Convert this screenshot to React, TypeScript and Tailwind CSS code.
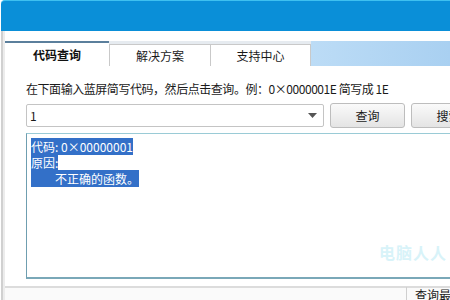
import React from 'react';

const font = { fontFamily: '"Noto Sans CJK SC", "Noto Sans", sans-serif' };

export default function App() {
    return (
        <div className="w-[450px] h-[300px] bg-white overflow-hidden flex flex-col text-[12px] text-[#1a1a1a]" style={font}>
            {/* Title bar */}
            <div className="h-[31px] shrink-0 bg-[#0a8fd8] border-t border-[#3ec0f0] rounded-tl-[4px] ml-[1px]" />

            {/* Window body */}
            <div className="flex-1 flex flex-col ml-[1px] border-l-2 border-[#d0d0d0]">
                <div className="flex-1 flex flex-col border-l-2 border-[#ececec] min-h-0">
                    <div className="h-[10px] shrink-0 bg-white" />

                    {/* Tabs */}
                    <div className="h-[25px] shrink-0 flex items-end bg-[#e6ebf0]">
                        <div className="w-[104px] h-[25px] bg-white border-t-2 border-[#5b7f9c] flex items-center justify-center font-bold text-[#111]">
                            代码查询
                        </div>
                        <div className="w-[101px] h-[22px] bg-white border-t border-l border-[#c9c9c9] flex items-center justify-center">
                            解决方案
                        </div>
                        <div className="w-[101px] h-[22px] bg-white border-t border-l border-r border-[#c9c9c9] flex items-center justify-center">
                            支持中心
                        </div>
                        <div className="flex-1 h-[25px] bg-gradient-to-r from-[#bcdcf6] to-[#a9d0f1]" />
                    </div>

                    {/* Panel */}
                    <div className="flex-1 flex flex-col pl-[21px] pt-[15px] min-h-0 border-b-2 border-[#dcdcdc]">
                        <p className="leading-[16px] tracking-[-0.45px] whitespace-nowrap">在下面输入蓝屏简写代码，然后点击查询。例：0×0000001E 简写成 1E</p>

                        <div className="mt-[6px] flex items-center gap-[6px]">
                            <div className="w-[298px] h-[23px] shrink-0 border border-[#c4c4c4] rounded-[2px] bg-white flex items-center justify-between pl-[3px] pr-[6px]">
                                <span>1</span>
                                <svg width="9" height="5" viewBox="0 0 9 5"><path d="M0 0h9L4.5 5z" fill="#555" /></svg>
                            </div>
                            <button className="w-[75px] h-[25px] shrink-0 border border-[#bdbdbd] rounded-[3px] bg-gradient-to-b from-[#fafafa] to-[#e4e4e4] flex items-center justify-center">
                                查询
                            </button>
                            <button className="w-[75px] h-[25px] shrink-0 border border-[#bdbdbd] rounded-[3px] bg-gradient-to-b from-[#fafafa] to-[#e4e4e4] flex items-center justify-center">
                                搜索
                            </button>
                        </div>

                        {/* Result box */}
                        <div className="relative mt-[5px] h-[146px] w-[440px] shrink-0 border-t border-t-[#9acbd6] border-l border-l-[#6f9eb0] border-b-2 border-b-[#7aa8b8] pt-[5px] pl-[4px] leading-[16px]">
                            <div><span className="bg-[#3370c8] text-white">代码: 0×00000001</span></div>
                            <div><span className="bg-[#3370c8] text-white">原因:</span></div>
                            <div><span className="bg-[#3370c8] text-white">　　不正确的函数。</span></div>
                            <div className="absolute left-[352px] top-[110px] text-[16px] font-bold text-[#d8f3f9] tracking-[1px] whitespace-nowrap">电脑人人</div>
                        </div>
                        <div className="flex-1" />
                    </div>

                    {/* Status bar */}
                    <div className="h-[12px] shrink-0 bg-[#fafafa] flex whitespace-nowrap">
                        <div className="w-[401px] shrink-0" />
                        <div className="border-l border-[#cfcfcf] pl-[8px] leading-[16px] -mt-[1px]">查询最</div>
                    </div>
                </div>
            </div>
        </div>
    );
}
